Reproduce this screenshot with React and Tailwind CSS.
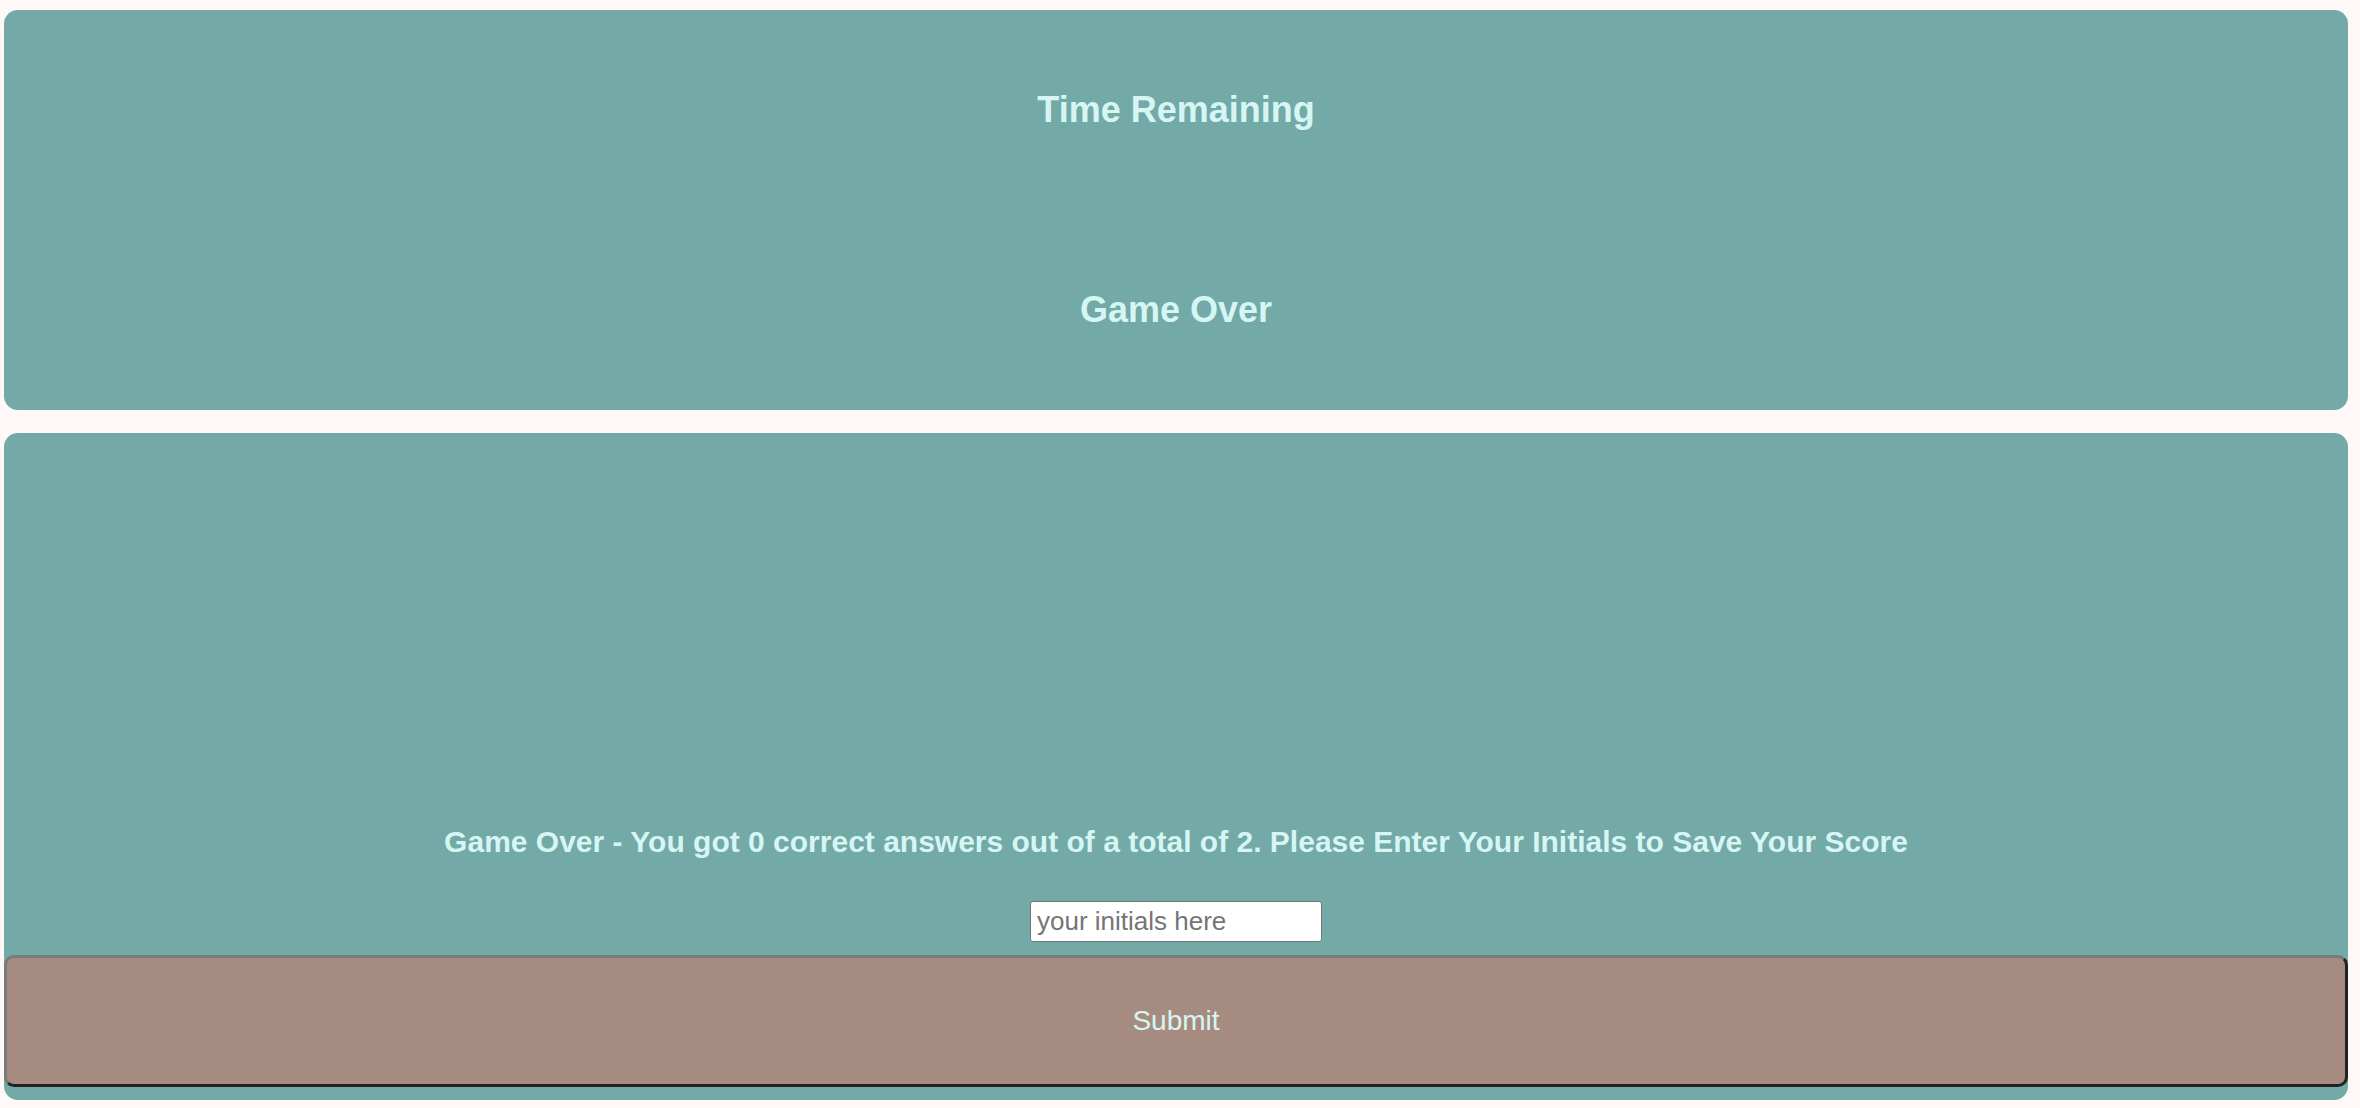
export default function App() {
  return (
    <div className="min-h-[1108px] bg-[#fef9f6] pt-[10px] pb-[8px] pl-[4px] pr-[12px] font-['Liberation_Sans',Arial,sans-serif] text-[#d6f6f4]">
      <div className="rounded-[14px] bg-[#73a9a6]">
        <div className="flex h-[200px] items-center justify-center">
          <h1 className="text-[36px] font-bold leading-none">Time Remaining</h1>
        </div>
        <div className="flex h-[200px] items-center justify-center">
          <h1 className="text-[36px] font-bold leading-none">Game Over</h1>
        </div>
      </div>

      <div className="mt-[23px] flex h-[667px] flex-col justify-end rounded-[14px] bg-[#73a9a6] pb-[13px]">
        <h2 className="text-center text-[30px] font-bold leading-[34px]">
          Game Over - You got 0 correct answers out of a total of 2. Please Enter Your Initials to Save Your Score
        </h2>
        <div className="mt-[42px] flex justify-center">
          <input
            type="text"
            placeholder="your initials here"
            className="h-[41px] w-[292px] rounded-[3px] border border-[#767676] bg-white px-[6px] text-[26px] text-black placeholder:text-[#757575] font-['Liberation_Sans',Arial,sans-serif]"
          />
        </div>
        <button className="mt-[13px] h-[132px] w-full rounded-[10px] border-[3px] border-t-[#7a7a7a] border-l-[#7a7a7a] border-b-[#222222] border-r-[#222222] bg-[#a68c80] text-[28px] text-[#d6f6f4]">
          Submit
        </button>
      </div>
    </div>
  );
}
